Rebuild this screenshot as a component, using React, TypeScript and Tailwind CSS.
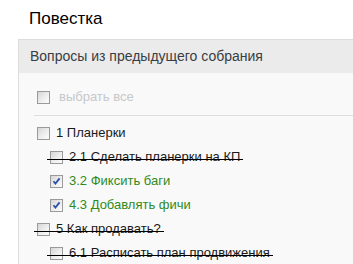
import React from 'react'

type Item = {
  label: string
  level: number
  done?: boolean
  struck?: boolean
}

const items: Item[] = [
  { label: '1 Планерки', level: 0 },
  { label: '2.1 Сделать планерки на КП', level: 1, struck: true },
  { label: '3.2 Фиксить баги', level: 1, done: true },
  { label: '4.3 Добавлять фичи', level: 1, done: true },
  { label: '5 Как продавать?', level: 0, struck: true },
  { label: '6.1 Расписать план продвижения', level: 1, struck: true },
]

function Box({ checked }: { checked?: boolean }) {
  return (
    <span className="relative w-[13px] h-[13px] shrink-0 border border-[#9a9a9a] bg-gradient-to-br from-[#d6d6d6] via-[#ececec] to-[#fdfdfd]">
      {checked && (
        <svg viewBox="0 0 11 11" className="absolute inset-0 w-[11px] h-[11px]">
          <path d="M2.5 5.2 L4.4 7.6 L8.6 2.4" fill="none" stroke="#2c4fa8" strokeWidth="1.8" />
        </svg>
      )}
    </span>
  )
}

export default function App() {
  return (
    <div className="w-[353px] h-[264px] overflow-hidden bg-white font-['Liberation_Sans',Arial,sans-serif]">
      <h1 className="pt-[9px] pl-[29px] text-[17px] leading-[20px] text-black">Повестка</h1>

      <div className="mt-[10px] ml-[18px] w-[360px] border-l border-t border-[#dddddd]">
        <div className="h-[33px] flex items-center pl-[11px] bg-[#ebebeb] text-[14px] text-[#383d44]">
          Вопросы из предыдущего собрания
        </div>

        <div className="bg-[#f9f9f9] pt-[12px] pl-[15px] pb-4">
          <div className="h-[24px] flex items-center gap-[9px] pl-[3px]">
            <Box />
            <span className="text-[13px] text-[#c6c8cb]">выбрать все</span>
          </div>
          <div className="mt-[6px] h-px bg-[#dddddd]" />

          <ul className="mt-[5px]">
            {items.map(item => (
              <li
                key={item.label}
                className={item.level ? 'h-[24px] flex items-center pl-[16px]' : 'h-[24px] flex items-center pl-[3px]'}
              >
                <span className="relative flex items-center gap-[6px]">
                  <Box checked={item.done} />
                  <span className={item.done ? 'text-[13px] text-[#2f8a1c]' : 'text-[13px] text-[#1a1a1a]'}>
                    {item.label}
                  </span>
                  {item.struck && (
                    <span className="absolute -left-[3px] -right-[3px] top-[12px] h-px bg-black" />
                  )}
                </span>
              </li>
            ))}
          </ul>
        </div>
      </div>
    </div>
  )
}
